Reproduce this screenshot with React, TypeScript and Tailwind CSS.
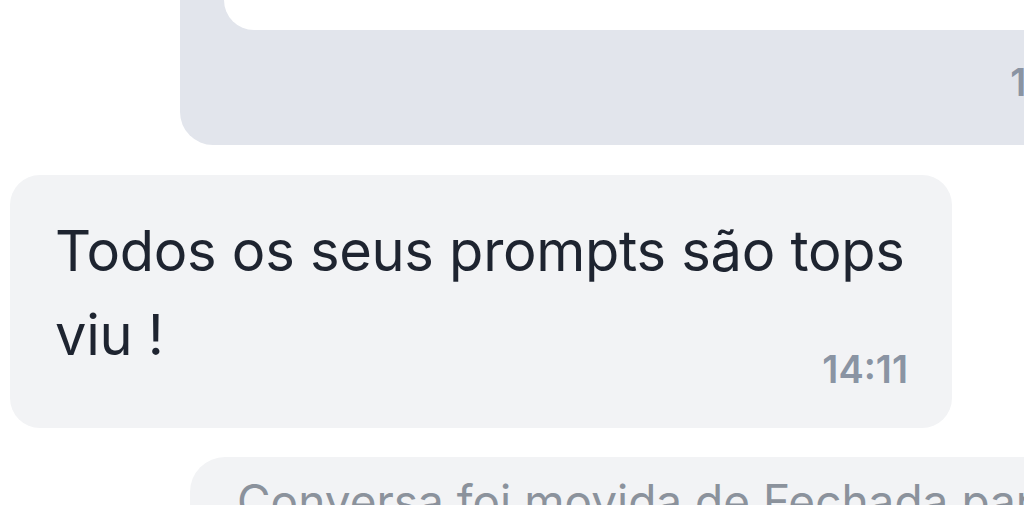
export default function App() {
  return (
    <div className="w-[1024px] h-[505px] overflow-hidden bg-white flex flex-col font-['Inter','Noto_Sans',sans-serif]">
      {/* Outgoing message with quoted reply, cut off at the top */}
      <div className="ml-[180px] w-[969px] shrink-0 -mt-[120px] bg-[#e2e5ec] rounded-[33px] pl-[44px] pr-[44px] pb-[41px]">
        <div className="h-[150px] bg-white rounded-b-[30px] rounded-t-[30px]" />
        <div className="mt-[30px] flex justify-end">
          <span className="text-[38px] leading-[44px] font-semibold text-[#8a94a3]">14:10</span>
        </div>
      </div>

      {/* Incoming message */}
      <div className="mt-[30px] ml-[10px] w-[942px] shrink-0 bg-[#f2f3f5] rounded-[30px] pl-[45px] pr-[24px] pt-[34px] pb-[37px]">
        <p className="text-[56px] leading-[84px] tracking-[-0.005em] text-[#1e2430]">Todos os seus prompts são tops viu !</p>
        <div className="-mt-[30px] pr-[20px] flex justify-end">
          <span className="text-[38px] leading-[44px] font-semibold text-[#8a94a3]">14:11</span>
        </div>
      </div>

      {/* System notice */}
      <div className="mt-[29px] ml-[190px] w-[900px] shrink-0 bg-[#f2f3f5] rounded-[35px] pl-[47px] pt-[14px] pb-[20px]">
        <p className="text-[46px] leading-[60px] text-[#8b929c] whitespace-nowrap">Conversa foi movida de Fechada para Aberta</p>
      </div>
    </div>
  )
}
